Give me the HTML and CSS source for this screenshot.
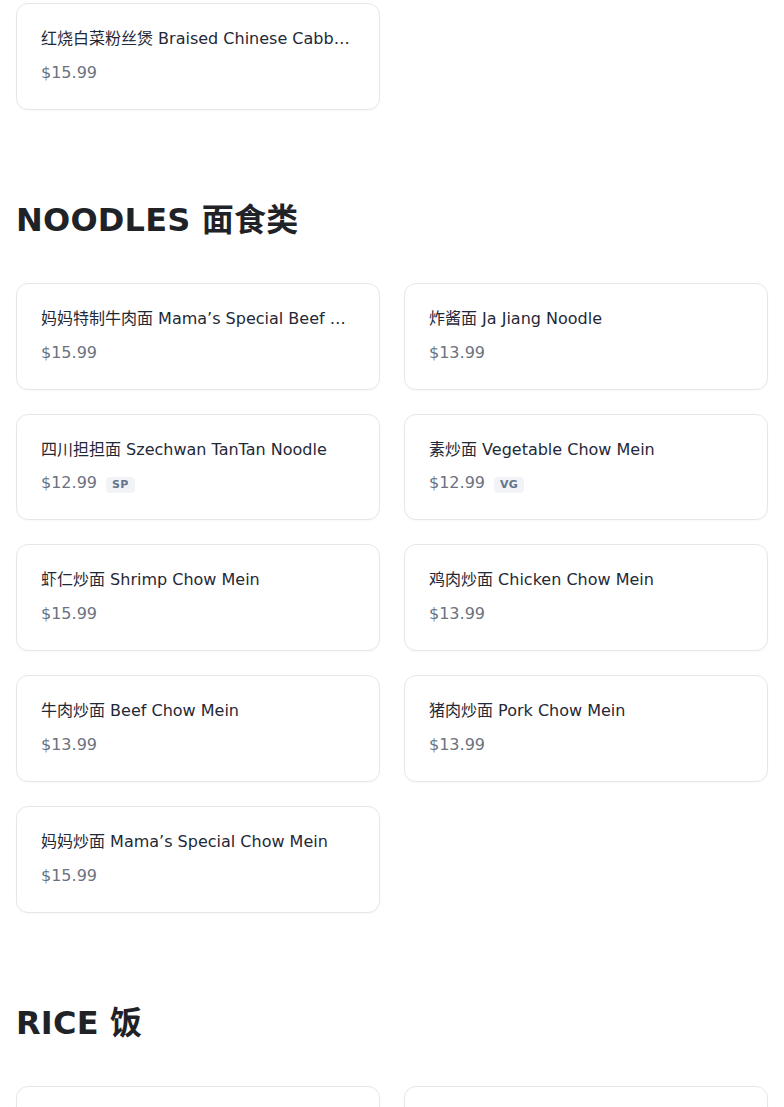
FILE: index.html
```html
<!DOCTYPE html>
<html lang="en">
<head>
<meta charset="utf-8">
<title>Menu</title>
<link rel="stylesheet" href="styles.css">
</head>
<body>
<main class="menu">
  <section class="section first">
    <div class="grid">
      <div class="card">
        <div class="name">红烧白菜粉丝煲 Braised Chinese Cabbage with Vermicelli</div>
        <div class="meta"><span class="price">$15.99</span></div>
      </div>
    </div>
  </section>

  <section class="section">
    <h2 class="heading">NOODLES 面食类</h2>
    <div class="grid">
      <div class="card">
        <div class="name">妈妈特制牛肉面 Mama’s Special Beef Stew Noodle Soup</div>
        <div class="meta"><span class="price">$15.99</span></div>
      </div>
      <div class="card">
        <div class="name">炸酱面 Ja Jiang Noodle</div>
        <div class="meta"><span class="price">$13.99</span></div>
      </div>
      <div class="card">
        <div class="name">四川担担面 Szechwan TanTan Noodle</div>
        <div class="meta"><span class="price">$12.99</span><span class="badge">SP</span></div>
      </div>
      <div class="card">
        <div class="name">素炒面 Vegetable Chow Mein</div>
        <div class="meta"><span class="price">$12.99</span><span class="badge">VG</span></div>
      </div>
      <div class="card">
        <div class="name">虾仁炒面 Shrimp Chow Mein</div>
        <div class="meta"><span class="price">$15.99</span></div>
      </div>
      <div class="card">
        <div class="name">鸡肉炒面 Chicken Chow Mein</div>
        <div class="meta"><span class="price">$13.99</span></div>
      </div>
      <div class="card">
        <div class="name">牛肉炒面 Beef Chow Mein</div>
        <div class="meta"><span class="price">$13.99</span></div>
      </div>
      <div class="card">
        <div class="name">猪肉炒面 Pork Chow Mein</div>
        <div class="meta"><span class="price">$13.99</span></div>
      </div>
      <div class="card">
        <div class="name">妈妈炒面 Mama’s Special Chow Mein</div>
        <div class="meta"><span class="price">$15.99</span></div>
      </div>
    </div>
  </section>

  <section class="section">
    <h2 class="heading">RICE 饭</h2>
    <div class="grid">
      <div class="card">
        <div class="name">扬州炒饭 Yang Chow Fried Rice</div>
        <div class="meta"><span class="price">$14.99</span></div>
      </div>
      <div class="card">
        <div class="name">鸡肉炒饭 Chicken Fried Rice</div>
        <div class="meta"><span class="price">$13.99</span></div>
      </div>
    </div>
  </section>
</main>
</body>
</html>
```

FILE: styles.css
```css
* { box-sizing: border-box; }

html, body {
  margin: 0;
  padding: 0;
  background: #ffffff;
}

body {
  font-family: "DejaVu Sans", "Noto Sans CJK SC", sans-serif;
  color: #1f2937;
  overflow: hidden;
}

.menu {
  padding: 3px 16px 0;
  display: flex;
  flex-direction: column;
  gap: 90px;
}

.heading {
  margin: 0 0 43px;
  font-size: 32px;
  line-height: 40px;
  font-weight: 700;
  color: #1f2328;
  letter-spacing: 0.2px;
}

.grid {
  display: grid;
  grid-template-columns: 1fr 1fr;
  gap: 24px;
}

.card {
  border: 1px solid #e5e7eb;
  border-radius: 12px;
  padding: 24px 24px;
  background: #fff;
  box-shadow: 0 1px 2px rgba(0, 0, 0, 0.03);
  min-width: 0;
}

.name {
  font-size: 16px;
  height: 20.75px;
  line-height: 22px;
  color: #1f2937;
  white-space: nowrap;
  overflow: hidden;
  text-overflow: ellipsis;
  margin-bottom: 12px;
}

.meta {
  display: flex;
  align-items: center;
  gap: 9px;
  height: 24px;
}

.price {
  font-size: 16px;
  line-height: 24px;
  color: #6b7280;
}

.badge {
  font-size: 11px;
  font-weight: 700;
  line-height: 16px;
  padding: 0 6px;
  margin-top: 3px;
  border-radius: 4px;
  background: #f1f3f6;
  color: #64748b;
  letter-spacing: 0.3px;
}
```
